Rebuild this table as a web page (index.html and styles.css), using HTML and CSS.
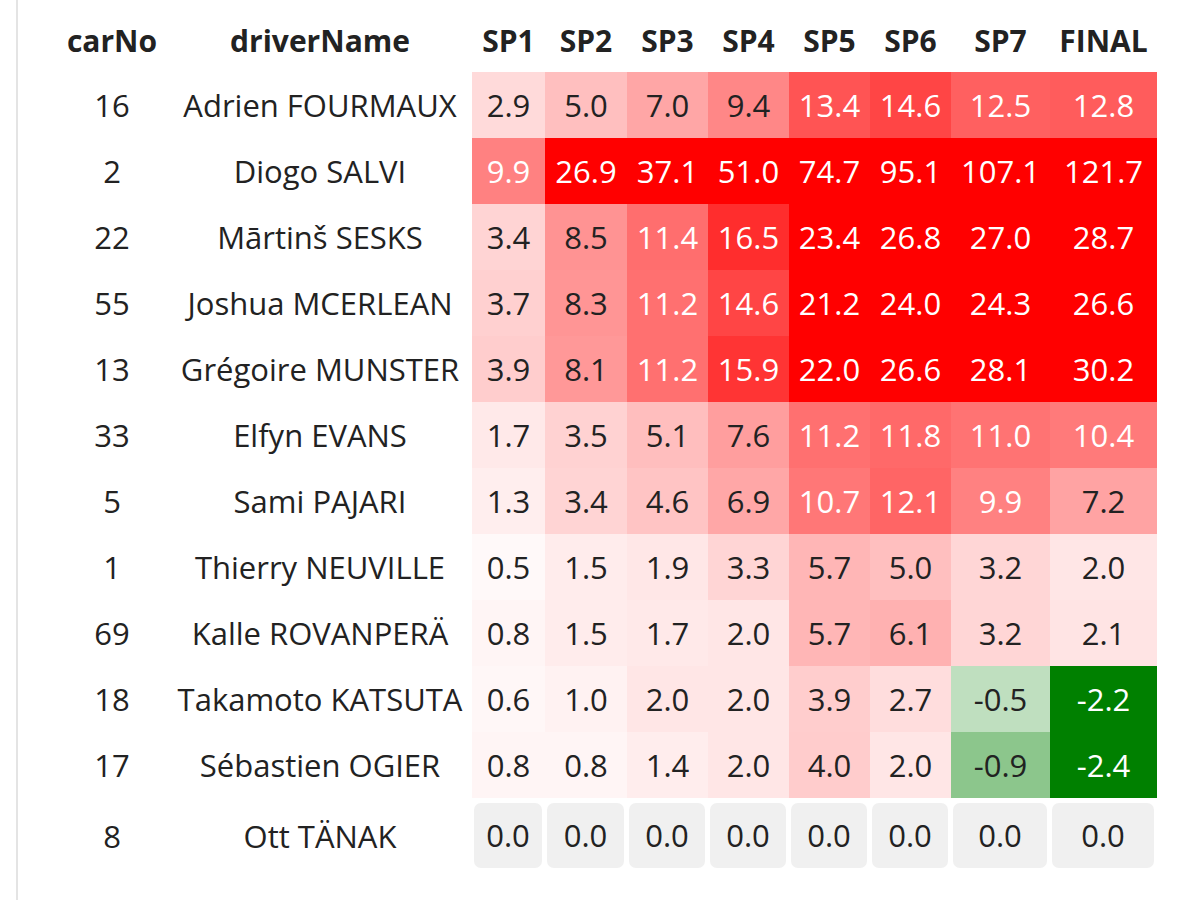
FILE: index.html
```html
<!DOCTYPE html>
<html lang="en">
<head>
<meta charset="utf-8">
<title>Stage time deltas</title>
<link rel="stylesheet" href="styles.css">
</head>
<body>
<div class="frame">
<table class="heat">
<colgroup>
<col class="c-car"><col class="c-name"><col class="c-sp1"><col class="c-sp2"><col class="c-sp"><col class="c-sp"><col class="c-sp"><col class="c-sp"><col class="c-sp7"><col class="c-final">
</colgroup>
<thead>
<tr><th>carNo</th><th>driverName</th><th>SP1</th><th>SP2</th><th>SP3</th><th>SP4</th><th>SP5</th><th>SP6</th><th>SP7</th><th>FINAL</th></tr>
</thead>
<tbody>
<tr><td>16</td><td>Adrien FOURMAUX</td>
<td class="v" style="background:#ffdada">2.9</td><td class="v" style="background:#ffbfbf">5.0</td><td class="v" style="background:#ffa6a6">7.0</td><td class="v" style="background:#ff8787">9.4</td><td class="v w" style="background:#ff5454">13.4</td><td class="v w" style="background:#ff4545">14.6</td><td class="v w" style="background:#ff6060">12.5</td><td class="v w" style="background:#ff5c5c">12.8</td></tr>
<tr><td>2</td><td>Diogo SALVI</td>
<td class="v w" style="background:#ff8181">9.9</td><td class="v w" style="background:#ff0000">26.9</td><td class="v w" style="background:#ff0000">37.1</td><td class="v w" style="background:#ff0000">51.0</td><td class="v w" style="background:#ff0000">74.7</td><td class="v w" style="background:#ff0000">95.1</td><td class="v w" style="background:#ff0000">107.1</td><td class="v w" style="background:#ff0000">121.7</td></tr>
<tr><td>22</td><td>Mārtinš SESKS</td>
<td class="v" style="background:#ffd4d4">3.4</td><td class="v" style="background:#ff9393">8.5</td><td class="v w" style="background:#ff6e6e">11.4</td><td class="v w" style="background:#ff2d2d">16.5</td><td class="v w" style="background:#ff0000">23.4</td><td class="v w" style="background:#ff0000">26.8</td><td class="v w" style="background:#ff0000">27.0</td><td class="v w" style="background:#ff0000">28.7</td></tr>
<tr><td>55</td><td>Joshua MCERLEAN</td>
<td class="v" style="background:#ffd0d0">3.7</td><td class="v" style="background:#ff9595">8.3</td><td class="v w" style="background:#ff7070">11.2</td><td class="v w" style="background:#ff4545">14.6</td><td class="v w" style="background:#ff0000">21.2</td><td class="v w" style="background:#ff0000">24.0</td><td class="v w" style="background:#ff0000">24.3</td><td class="v w" style="background:#ff0000">26.6</td></tr>
<tr><td>13</td><td>Grégoire MUNSTER</td>
<td class="v" style="background:#ffcdcd">3.9</td><td class="v" style="background:#ff9898">8.1</td><td class="v w" style="background:#ff7070">11.2</td><td class="v w" style="background:#ff3434">15.9</td><td class="v w" style="background:#ff0000">22.0</td><td class="v w" style="background:#ff0000">26.6</td><td class="v w" style="background:#ff0000">28.1</td><td class="v w" style="background:#ff0000">30.2</td></tr>
<tr><td>33</td><td>Elfyn EVANS</td>
<td class="v" style="background:#ffe9e9">1.7</td><td class="v" style="background:#ffd2d2">3.5</td><td class="v" style="background:#ffbebe">5.1</td><td class="v" style="background:#ff9e9e">7.6</td><td class="v w" style="background:#ff7070">11.2</td><td class="v w" style="background:#ff6969">11.8</td><td class="v w" style="background:#ff7373">11.0</td><td class="v w" style="background:#ff7a7a">10.4</td></tr>
<tr><td>5</td><td>Sami PAJARI</td>
<td class="v" style="background:#ffeeee">1.3</td><td class="v" style="background:#ffd4d4">3.4</td><td class="v" style="background:#ffc4c4">4.6</td><td class="v" style="background:#ffa7a7">6.9</td><td class="v w" style="background:#ff7777">10.7</td><td class="v w" style="background:#ff6565">12.1</td><td class="v w" style="background:#ff8181">9.9</td><td class="v" style="background:#ffa3a3">7.2</td></tr>
<tr><td>1</td><td>Thierry NEUVILLE</td>
<td class="v" style="background:#fff9f9">0.5</td><td class="v" style="background:#ffecec">1.5</td><td class="v" style="background:#ffe7e7">1.9</td><td class="v" style="background:#ffd5d5">3.3</td><td class="v" style="background:#ffb6b6">5.7</td><td class="v" style="background:#ffbfbf">5.0</td><td class="v" style="background:#ffd6d6">3.2</td><td class="v" style="background:#ffe6e6">2.0</td></tr>
<tr><td>69</td><td>Kalle ROVANPERÄ</td>
<td class="v" style="background:#fff5f5">0.8</td><td class="v" style="background:#ffecec">1.5</td><td class="v" style="background:#ffe9e9">1.7</td><td class="v" style="background:#ffe6e6">2.0</td><td class="v" style="background:#ffb6b6">5.7</td><td class="v" style="background:#ffb1b1">6.1</td><td class="v" style="background:#ffd6d6">3.2</td><td class="v" style="background:#ffe4e4">2.1</td></tr>
<tr><td>18</td><td>Takamoto KATSUTA</td>
<td class="v" style="background:#fff7f7">0.6</td><td class="v" style="background:#fff2f2">1.0</td><td class="v" style="background:#ffe6e6">2.0</td><td class="v" style="background:#ffe6e6">2.0</td><td class="v" style="background:#ffcdcd">3.9</td><td class="v" style="background:#ffdddd">2.7</td><td class="v" style="background:#bfdfbf">-0.5</td><td class="v w" style="background:#008000">-2.2</td></tr>
<tr><td>17</td><td>Sébastien OGIER</td>
<td class="v" style="background:#fff5f5">0.8</td><td class="v" style="background:#fff5f5">0.8</td><td class="v" style="background:#ffeded">1.4</td><td class="v" style="background:#ffe6e6">2.0</td><td class="v" style="background:#ffcccc">4.0</td><td class="v" style="background:#ffe6e6">2.0</td><td class="v" style="background:#8cc68c">-0.9</td><td class="v w" style="background:#008000">-2.4</td></tr>
<tr class="zero-row"><td>8</td><td>Ott TÄNAK</td>
<td><div class="zero">0.0</div></td><td><div class="zero">0.0</div></td><td><div class="zero">0.0</div></td><td><div class="zero">0.0</div></td><td><div class="zero">0.0</div></td><td><div class="zero">0.0</div></td><td><div class="zero">0.0</div></td><td><div class="zero">0.0</div></td></tr>
</tbody>
</table>
</div>
</body>
</html>
```

FILE: styles.css
```css
html, body {
  margin: 0;
  padding: 0;
  background: #ffffff;
}

body {
  font-family: "Open Sans", "DejaVu Sans", sans-serif;
  color: #222222;
}

.frame {
  margin-left: 16px;
  border-left: 2px solid #e4e4e4;
  min-height: 900px;
  box-sizing: border-box;
  padding-top: 8px;
}

.heat {
  margin-left: 38px;
  table-layout: fixed;
  width: 1101px;
  border-collapse: collapse;
  border-spacing: 0;
  font-size: 30px;
}

.c-car { width: 112px; }
.c-name { width: 304px; }
.c-sp1 { width: 73px; }
.c-sp2 { width: 82px; }
.c-sp { width: 81px; }
.c-sp7 { width: 99px; }
.c-final { width: 107px; }

.heat th {
  height: 64px;
  padding: 0;
  font-weight: 700;
  text-align: center;
  vertical-align: middle;
  color: #222222;
  white-space: nowrap;
}

.heat td {
  height: 66px;
  padding: 0;
  font-size: 31px;
  text-align: center;
  vertical-align: middle;
  white-space: nowrap;
}

.heat td.w {
  color: #ffffff;
}

.zero-row td {
  height: 70px;
  padding-top: 5px;
  vertical-align: top;
}

.zero-row td:nth-child(1),
.zero-row td:nth-child(2) {
  padding-top: 0;
  vertical-align: middle;
}

.zero {
  height: 65px;
  line-height: 65px;
  margin: 0 3px 0 2px;
  border-radius: 7px;
  background: #f0f0f0;
}
```
